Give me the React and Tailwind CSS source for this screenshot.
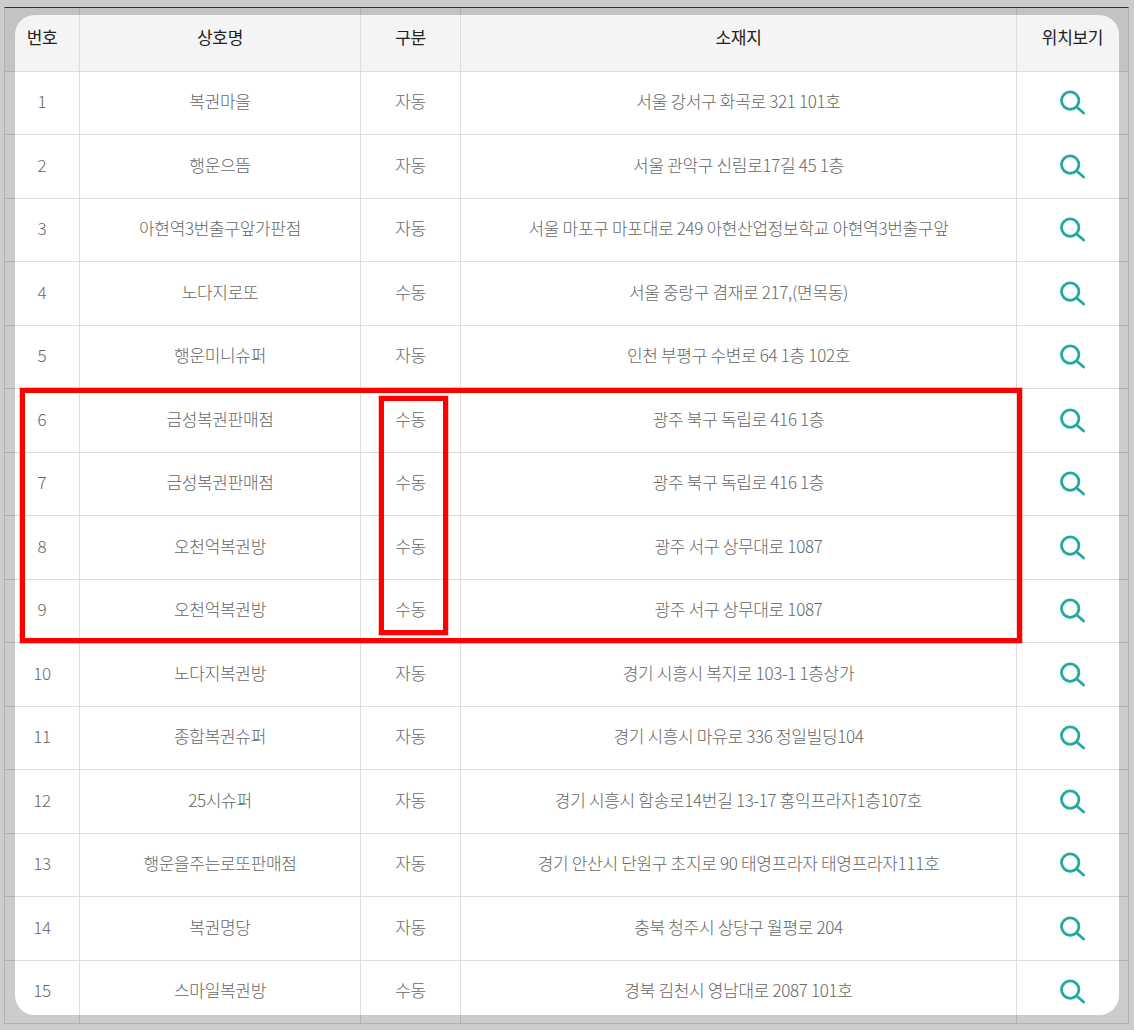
import React from 'react';

const rows = [
  ['1', '복권마을', '자동', '서울 강서구 화곡로 321 101호'],
  ['2', '행운으뜸', '자동', '서울 관악구 신림로17길 45 1층'],
  ['3', '아현역3번출구앞가판점', '자동', '서울 마포구 마포대로 249 아현산업정보학교 아현역3번출구앞'],
  ['4', '노다지로또', '수동', '서울 중랑구 겸재로 217,(면목동)'],
  ['5', '행운미니슈퍼', '자동', '인천 부평구 수변로 64 1층 102호'],
  ['6', '금성복권판매점', '수동', '광주 북구 독립로 416 1층'],
  ['7', '금성복권판매점', '수동', '광주 북구 독립로 416 1층'],
  ['8', '오천억복권방', '수동', '광주 서구 상무대로 1087'],
  ['9', '오천억복권방', '수동', '광주 서구 상무대로 1087'],
  ['10', '노다지복권방', '자동', '경기 시흥시 복지로 103-1 1층상가'],
  ['11', '종합복권슈퍼', '자동', '경기 시흥시 마유로 336 정일빌딩104'],
  ['12', '25시슈퍼', '자동', '경기 시흥시 함송로14번길 13-17 홍익프라자1층107호'],
  ['13', '행운을주는로또판매점', '자동', '경기 안산시 단원구 초지로 90 태영프라자 태영프라자111호'],
  ['14', '복권명당', '자동', '충북 청주시 상당구 월평로 204'],
  ['15', '스마일복권방', '수동', '경북 김천시 영남대로 2087 101호'],
];

const grid = 'grid grid-cols-[75px_281px_100px_556px_1fr]';
const heads = ['번호', '상호명', '구분', '소재지', '위치보기'];

const SearchIcon = () => (
  <svg width="26" height="26" viewBox="0 0 26 26" fill="none" stroke="#22aa9e" strokeWidth="2.8" strokeLinecap="round">
    <circle cx="10.2" cy="10.6" r="8.7" />
    <path d="M17 17.2 L23.6 23" />
  </svg>
);

const App = () => (
  <div className="w-[1134px] h-[1030px] bg-[#cccccc] pt-[7px] pl-[4px] pr-[5px] overflow-hidden font-['Noto_Sans_CJK_KR','Noto_Sans',sans-serif] tracking-[-0.32px]">
    <div className="relative h-[1017px] overflow-hidden bg-white border border-x-[#b1b1b1] border-b-[#b1b1b1] border-t-[#333333]">
      <div className={`${grid} h-[63.5px] bg-[#f4f4f4] border-b border-[#dddddd] text-[17px] text-[#222222]`}>
        {heads.map((h) => (
          <div key={h} className="flex items-center justify-center pb-[5px] border-r border-[#dddddd] last:border-r-0">{h}</div>
        ))}
      </div>
      {rows.map((r) => (
        <div key={r[0]} className={`${grid} h-[63.5px] bg-white border-b border-[#dddddd] text-[17px] font-light text-[#666666]`}>
          {r.map((c) => (
            <div key={c} className="flex items-center justify-center pb-[4px] border-r border-[#dddddd]">{c}</div>
          ))}
          <div className="flex items-center justify-center pt-[1px]">
            <SearchIcon />
          </div>
        </div>
      ))}
      {/* grey frame round the rounded card */}
      <div className="absolute inset-0 overflow-hidden pointer-events-none">
        <div className="absolute left-[10px] top-[7px] right-[9px] bottom-[8px] rounded-[20px] shadow-[0_0_0_30px_rgba(0,0,0,0.2)]" />
      </div>
      {/* red highlight boxes */}
      <div className="absolute left-[15px] top-[380px] w-[1002px] h-[255px] border-[5px] border-[#ff0000] shadow-[0_0_0_1px_rgba(255,0,0,0.25)] pointer-events-none" />
      <div className="absolute left-[374px] top-[388px] w-[69px] h-[239px] border-[5px] border-[#ff0000] shadow-[0_0_0_1px_rgba(255,0,0,0.25)] pointer-events-none" />
    </div>
  </div>
);

export default App;
